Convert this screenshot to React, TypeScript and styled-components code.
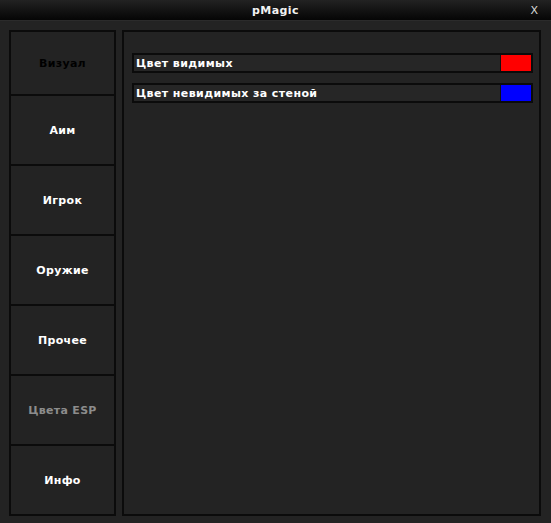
import React from "react";
import styled, { createGlobalStyle } from "styled-components";

const Global = createGlobalStyle`
  html, body { margin: 0; padding: 0; background: #232323; }
  body { width: 551px; height: 523px; overflow: hidden; }
`;

const Window = styled.div`
  width: 551px;
  height: 523px;
  background: #232323;
  display: flex;
  flex-direction: column;
  font-family: "DejaVu Sans", Verdana, sans-serif;
  font-size: 11px;
  font-weight: bold;
  color: #ffffff;
  box-sizing: border-box;
`;

const TitleBar = styled.div`
  height: 20px;
  flex: 0 0 20px;
  background: linear-gradient(#222222, #050505);
  display: grid;
  grid-template-columns: 1fr auto 1fr;
  align-items: center;
  border-bottom: 1px solid #2b2b2b;
`;

const Title = styled.span`
  grid-column: 2;
  color: #f2f2f2;
  letter-spacing: 0.4px;
`;

const Close = styled.span`
  grid-column: 3;
  justify-self: end;
  margin-right: 13px;
  color: #d8d8d8;
  font-weight: normal;
  font-size: 11px;
`;

const Body = styled.div`
  flex: 1;
  display: flex;
  gap: 6px;
  padding: 9px 10px 7px 9px;
  min-height: 0;
`;

const Sidebar = styled.div`
  width: 107px;
  box-sizing: border-box;
  border: 2px solid #0b0b0b;
  display: flex;
  flex-direction: column;
`;

const Tab = styled.div<{ $active?: boolean; $disabled?: boolean }>`
  flex: ${(p) => (p.$active ? "62" : "68")} 1 0;
  display: flex;
  align-items: center;
  justify-content: center;
  border-bottom: 2px solid #0b0b0b;
  color: ${(p) => (p.$active ? "#000000" : p.$disabled ? "#8c8c8c" : "#ffffff")};
  letter-spacing: 0.3px;
  &:last-child { border-bottom: none; }
`;

const Content = styled.div`
  flex: 1;
  box-sizing: border-box;
  border: 2px solid #0b0b0b;
  padding: 21px 6px 0 8px;
  display: flex;
  flex-direction: column;
  gap: 10px;
`;

const Row = styled.div`
  height: 20px;
  box-sizing: border-box;
  border: 2px solid #0b0b0b;
  background: #262626;
  display: flex;
  align-items: center;
`;

const Label = styled.span`
  flex: 1;
  padding-left: 2px;
  letter-spacing: 0.4px;
`;

const Swatch = styled.div<{ $color: string }>`
  width: 31px;
  height: 100%;
  box-sizing: border-box;
  border-left: 1px solid #111;
  background: ${(p) => p.$color};
`;

const tabs = [
  { name: "Визуал", active: true },
  { name: "Аим" },
  { name: "Игрок" },
  { name: "Оружие" },
  { name: "Прочее" },
  { name: "Цвета ESP", disabled: true },
  { name: "Инфо" },
];

export default function App() {
  return (
    <Window>
      <Global />
      <TitleBar>
        <Title>pMagic</Title>
        <Close>X</Close>
      </TitleBar>
      <Body>
        <Sidebar>
          {tabs.map((t) => (
            <Tab key={t.name} $active={t.active} $disabled={t.disabled}>
              {t.name}
            </Tab>
          ))}
        </Sidebar>
        <Content>
          <Row>
            <Label>Цвет видимых</Label>
            <Swatch $color="#ff0000" />
          </Row>
          <Row>
            <Label>Цвет невидимых за стеной</Label>
            <Swatch $color="#0000ff" />
          </Row>
        </Content>
      </Body>
    </Window>
  );
}
